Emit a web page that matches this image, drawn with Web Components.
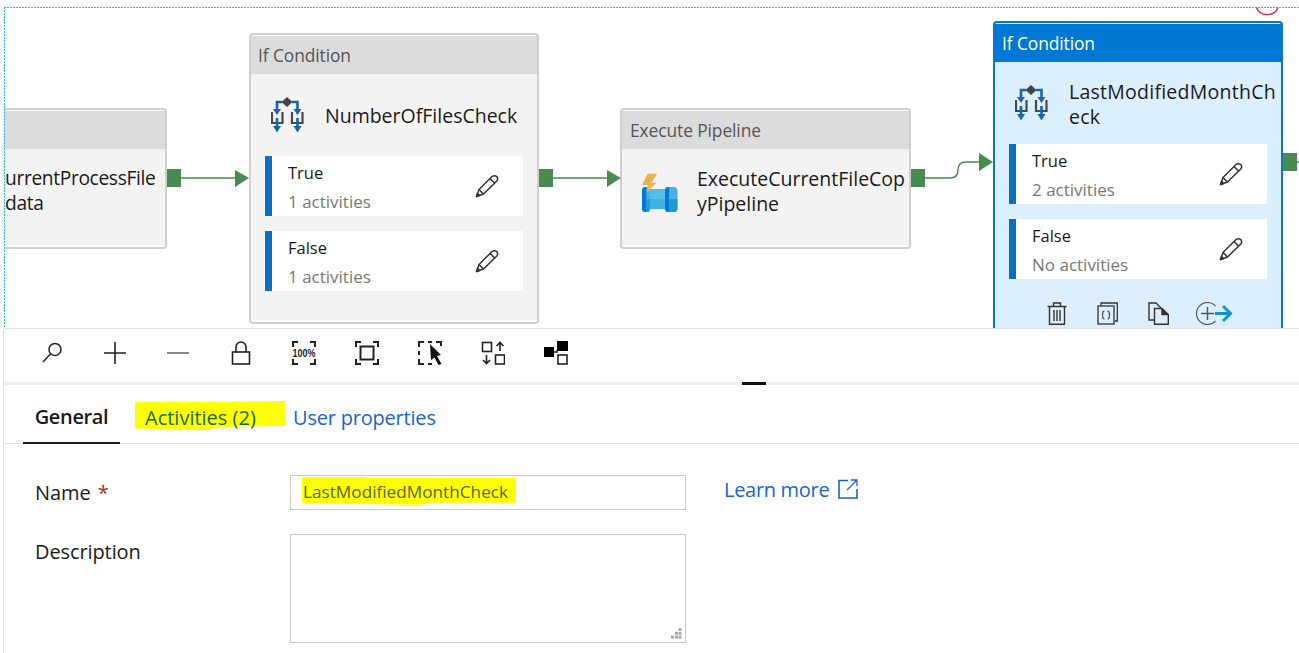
<!DOCTYPE html>
<html>
<head>
<meta charset="utf-8">
<title>Pipeline</title>
<style>
    html, body {
        margin: 0;
        height: 100%;
        overflow: hidden;
        background: #FFF;
        font-family: "Open Sans", "Noto Sans", sans-serif;
    }
</style>
</head>
<body>
<adf-page>
    <pipeline-canvas>
        <pipeline-node style="--x: 4px; --y: 108px; --w: 163px; --row: 86px" clipped header="">
            <span slot="name">urrentProcessFile<br>data</span>
        </pipeline-node>

        <pipeline-node style="--x: 249px; --y: 33px; --w: 290px; --h: 291px; --row: 82px; --nudge: 0px" header="If Condition">
            <if-icon slot="icon"></if-icon>
            <span slot="name">NumberOfFilesCheck</span>
            <branch-row label="True" count="1 activities"></branch-row>
            <branch-row label="False" count="1 activities"></branch-row>
        </pipeline-node>

        <pipeline-node style="--x: 620px; --y: 108px; --w: 291px; --h: 141px; --row: 86px; --pad: 21px; --head-pad: 8px" header="Execute Pipeline">
            <pipe-icon slot="icon"></pipe-icon>
            <span slot="name">ExecuteCurrentFileCop<br>yPipeline</span>
        </pipeline-node>

        <pipeline-node selected style="--x: 993px; --y: 21px; --w: 290px; --h: 330px; --row: 82px; --nudge: 1px; --name-ls: 0.25px" header="If Condition">
            <if-icon slot="icon"></if-icon>
            <span slot="name">LastModifiedMonthCh<br>eck</span>
            <branch-row label="True" count="2 activities"></branch-row>
            <branch-row label="False" count="No activities"></branch-row>
            <node-actions slot="actions"></node-actions>
        </pipeline-node>
    </pipeline-canvas>
    <canvas-toolbar></canvas-toolbar>
    <tab-bar></tab-bar>
    <prop-form></prop-form>
</adf-page>

<script>
const PENCIL = `<svg width="24" height="24" viewBox="0 0 24 24" fill="none" stroke="#333" stroke-width="1.5" stroke-linejoin="round">
    <path d="M1.5 22.5 L4 15.5 L17 2.5 Q19.5 0.8 21.8 2.5 Q23.5 5 21.8 7 L8.5 20 Z"/>
    <path d="M4 15.5 L8.5 20 M15 4.5 L19.8 9.2"/>
    <path d="M1.5 22.5 L2.5 19.5 L4.5 21.5 Z" fill="#333"/>
</svg>`;

class AdfPage extends HTMLElement {
    constructor() {
        super();
        this.shadowDOM = this.attachShadow({ mode: "open" });
    };

    connectedCallback() {
        this.shadowDOM.innerHTML = `
            <style>
                :host {
                    display: flex;
                    flex-direction: column;
                    width: 1299px;
                    height: 653px;
                    overflow: hidden;
                    color: #201f1e;
                }
            </style>
            <slot></slot>
        `;
    };
};

class PipelineCanvas extends HTMLElement {
    constructor() {
        super();
        this.shadowDOM = this.attachShadow({ mode: "open" });
    };

    connectedCallback() {
        this.shadowDOM.innerHTML = `
            <style>
                :host {
                    display: block;
                    position: relative;
                    flex: none;
                    height: 329px;
                    overflow: hidden;
                }
                .guide-top {
                    position: absolute;
                    top: 7px;
                    left: 4px;
                    right: 0;
                    height: 1px;
                    background: repeating-linear-gradient(90deg, #22b8e0 0 2px, transparent 2px 3px);
                }
                .guide-left {
                    position: absolute;
                    top: 7px;
                    bottom: 0;
                    left: 4px;
                    width: 1px;
                    background: repeating-linear-gradient(180deg, #22b8e0 0 2px, transparent 2px 3px);
                    z-index: 2;
                }
                .rule {
                    position: absolute;
                    left: 4px;
                    right: 0;
                    bottom: 0;
                    height: 1px;
                    background: #e1e1e1;
                    z-index: 3;
                }
                svg {
                    position: absolute;
                    left: 0;
                    top: 0;
                }
            </style>
            <div class="guide-top"></div>
            <div class="guide-left"></div>
            <slot></slot>
            <div class="rule"></div>
            <svg width="1299" height="328" viewBox="0 0 1299 328" fill="none">
                <path d="M1256.5 7.5 A11 9 0 0 0 1278 7.5" stroke="#e0282e" stroke-width="1.4"/>
                <g fill="#488a4f">
                    <rect x="167" y="169" width="14" height="18"/>
                    <rect x="539" y="169" width="14" height="18"/>
                    <rect x="911" y="169" width="14" height="18"/>
                    <rect x="1283" y="153" width="14" height="18"/>
                    <path d="M235 170 L249 178 L235 187 Z"/>
                    <path d="M607 170 L621 178 L607 187 Z"/>
                    <path d="M979 153 L993 162 L979 171 Z"/>
                </g>
                <g stroke="#488a4f" stroke-width="1.4">
                    <path d="M181 178 H236"/>
                    <path d="M553 178 H608"/>
                    <path d="M925 178 H950 C956 178 958 175 958 170 C958 165 960 162 966 162 H980"/>
                    <path d="M1297 162 H1299"/>
                </g>
            </svg>
        `;
    };
};

class PipelineNode extends HTMLElement {
    constructor() {
        super();
        this.shadowDOM = this.attachShadow({ mode: "open" });
    };

    connectedCallback() {
        this.shadowDOM.innerHTML = `
            <style>
                :host {
                    position: absolute;
                    left: var(--x);
                    top: var(--y);
                    width: var(--w);
                    height: var(--h, 141px);
                    box-sizing: border-box;
                    display: flex;
                    flex-direction: column;
                    border: 2px solid #cfcfcf;
                    border-radius: 4px;
                    padding: 1px 0 2px;
                    background: #FFF;
                    --fill: #f3f3f3;
                    --head: #dcdcdc;
                    --head-text: #555;
                }
                :host([clipped]) {
                    border-left: 0;
                    border-radius: 0 4px 4px 0;
                }
                :host([selected]) {
                    border: 2px solid #0078d4;
                    --fill: #dcefff;
                    --head: #0078d4;
                    --head-text: #FFF;
                }
                .head {
                    flex: none;
                    height: 38px;
                    box-sizing: border-box;
                    padding-left: var(--head-pad, 7px);
                    background: var(--head);
                    color: var(--head-text);
                    font-size: 17.4px;
                    line-height: 38px;
                    letter-spacing: -0.1px;
                }
                .body {
                    flex: 1;
                    display: flex;
                    flex-direction: column;
                    background: var(--fill);
                }
                .row {
                    flex: none;
                    display: flex;
                    align-items: center;
                    height: var(--row);
                    padding-left: var(--pad, 20px);
                }
                :host([clipped]) .row {
                    padding-left: 1px;
                    align-items: flex-start;
                }
                .icon {
                    flex: none;
                    width: 54px;
                }
                :host([clipped]) .icon {
                    display: none;
                }
                .name {
                    font-size: 19.5px;
                    line-height: 25px;
                    color: #1b1a19;
                    white-space: nowrap;
                    position: relative;
                    top: var(--nudge, -1px);
                    letter-spacing: var(--name-ls, 0);
                }
                :host([clipped]) .name {
                    padding-top: 17px;
                    font-size: 19.2px;
                    letter-spacing: -0.35px;
                }
                .branches {
                    display: flex;
                    flex-direction: column;
                    gap: 15px;
                    padding: 0 14px;
                }
            </style>
            <div class="head">${this.getAttribute("header")}</div>
            <div class="body">
                <div class="row">
                    <div class="icon"><slot name="icon"></slot></div>
                    <div class="name"><slot name="name"></slot></div>
                </div>
                <div class="branches"><slot></slot></div>
                <slot name="actions"></slot>
            </div>
        `;
    };
};

class BranchRow extends HTMLElement {
    constructor() {
        super();
        this.shadowDOM = this.attachShadow({ mode: "open" });
    };

    connectedCallback() {
        this.shadowDOM.innerHTML = `
            <style>
                :host {
                    display: flex;
                    align-items: center;
                    height: 60px;
                    box-sizing: border-box;
                    padding-left: 16px;
                    padding-right: 24px;
                    background: #FFF;
                    border-left: 7px solid #106ebe;
                }
                .text {
                    flex: 1;
                    display: flex;
                    flex-direction: column;
                    gap: 5px;
                    padding-top: 3px;
                }
                .label {
                    font-size: 16.5px;
                    line-height: 24px;
                    color: #1b1a19;
                }
                .count {
                    font-size: 17px;
                    line-height: 24px;
                    color: #777;
                }
                svg {
                    display: block;
                }
            </style>
            <div class="text">
                <div class="label">${this.getAttribute("label")}</div>
                <div class="count">${this.getAttribute("count")}</div>
            </div>
            ${PENCIL}
        `;
    };
};

class IfIcon extends HTMLElement {
    constructor() {
        super();
        this.shadowDOM = this.attachShadow({ mode: "open" });
    };

    connectedCallback() {
        this.shadowDOM.innerHTML = `
            <style>
                :host { display: block; width: 34px; height: 36px; }
            </style>
            <svg width="34" height="36" viewBox="0 0 34 36" fill="none">
                <path d="M1 15 V26 H11.5 V15 M21 15 V26 H31.5 V15" stroke="#4a4a4a" stroke-width="2.2"/>
                <path d="M11 5 H6 V15 M21 5 H26.5 V15 M6 21 V32 M26.5 21 V32" stroke="#1565b0" stroke-width="2.6"/>
                <path d="M2 12 L6 18 L10 12 Z M22.5 12 L26.5 18 L30.5 12 Z M2 29 L6 35.5 L10 29 Z M22.5 29 L26.5 35.5 L30.5 29 Z" fill="#1565b0"/>
                <path d="M16 0 L21.5 5 L16 10 L10.5 5 Z" fill="#444"/>
            </svg>
        `;
    };
};

class PipeIcon extends HTMLElement {
    constructor() {
        super();
        this.shadowDOM = this.attachShadow({ mode: "open" });
    };

    connectedCallback() {
        this.shadowDOM.innerHTML = `
            <style>
                :host { display: block; width: 37px; height: 40px; margin: 1px 0 0 -2px; }
            </style>
            <svg width="37" height="40" viewBox="0 0 37 40">
                <rect x="8" y="16" width="18" height="10" fill="#55bde6"/>
                <rect x="8" y="26" width="18" height="10" fill="#3fb2e2"/>
                <path d="M5 14 Q1 14 1 18 V35 Q1 39 5 39 H7 Q9 39 9 35 V18 Q9 14 7 14 Z" fill="#4fb0e0"/>
                <path d="M4 14 Q1 14 1 18 V35 Q1 39 4 39 H5.5 V14 Z" fill="#0078d4"/>
                <path d="M5.5 26 H9 V35 Q9 39 7 39 H5.5 Z" fill="#1c9bd8"/>
                <path d="M27 14 Q24 14 24 18 V35 Q24 39 27 39 H33 Q36.5 39 36.5 35 V18 Q36.5 14 33 14 Z" fill="#4cb0e0"/>
                <path d="M27 14 Q24 14 24 18 V35 Q24 39 27 39 H28 V14 Z" fill="#0078d4"/>
                <path d="M28 26 H36.5 V35 Q36.5 39 33 39 H28 Z" fill="#1c9bd8"/>
                <path d="M6.3 0.7 H16.3 L10.6 9.7 H15.6 L5.6 19.6 L6.8 12 H1.3 Z" fill="#e8b455"/>
            </svg>
        `;
    };
};

class NodeActions extends HTMLElement {
    constructor() {
        super();
        this.shadowDOM = this.attachShadow({ mode: "open" });
    };

    connectedCallback() {
        this.shadowDOM.innerHTML = `
            <style>
                :host {
                    display: flex;
                    align-items: center;
                    gap: 30px;
                    padding: 23px 0 0 52px;
                }
                svg { display: block; flex: none; }
            </style>
            <svg width="20" height="23" viewBox="0 0 20 23" fill="none" stroke="#333" stroke-width="1.4">
                <path d="M0.5 4.5 H19.5 M6.5 4.5 V1 H13.5 V4.5 M2.5 4.5 V22.3 H17.5 V4.5"/>
                <path d="M7 8 V19 M10 8 V19 M13 8 V19"/>
            </svg>
            <svg width="21" height="23" viewBox="0 0 21 23" fill="none" stroke="#333" stroke-width="1.3">
                <path d="M4 3.5 V1 H20.3 V19 H17.5"/>
                <rect x="1" y="4" width="16" height="18"/>
                <path d="M7.5 9 Q5.8 9 5.8 10.5 V11.8 Q5.8 13 4.8 13 Q5.8 13 5.8 14.2 V15.5 Q5.8 17 7.5 17 M10.5 9 Q12.2 9 12.2 10.5 V11.8 Q12.2 13 13.2 13 Q12.2 13 12.2 14.2 V15.5 Q12.2 17 10.5 17" stroke-width="1.1"/>
            </svg>
            <svg width="21" height="23" viewBox="0 0 21 23" fill="none" stroke="#333" stroke-width="1.4">
                <path d="M6 18 H1 V1 H8 L12.5 5.5 V6.5"/>
                <path d="M6.5 6.5 H14 L20.3 12.5 V22.3 H6.5 Z"/>
                <path d="M14 6.5 V12.5 H20.3" fill="#333"/>
            </svg>
            <svg width="37" height="23" viewBox="0 0 37 23" fill="none" style="margin-left: -3px">
                <path d="M19.5 19 A11 11 0 1 1 19.5 4" stroke="#555" stroke-width="1.2"/>
                <path d="M5 11.5 H18 M11.5 5 V18" stroke="#555" stroke-width="1.4"/>
                <path d="M19 11.5 H34 M27 4 L34.5 11.5 L27 19" stroke="#1295c9" stroke-width="3"/>
            </svg>
        `;
    };
};

class CanvasToolbar extends HTMLElement {
    constructor() {
        super();
        this.shadowDOM = this.attachShadow({ mode: "open" });
    };

    connectedCallback() {
        this.shadowDOM.innerHTML = `
            <style>
                :host {
                    display: flex;
                    align-items: center;
                    flex: none;
                    height: 53px;
                    box-sizing: border-box;
                    gap: 39px;
                    padding: 0 0 5px 36px;
                    margin-left: 3px;
                    border-left: 1px solid #e1e1e1;
                }
                svg { display: block; flex: none; }
                text { font: bold 9px "Liberation Sans", sans-serif; fill: #222; }
            </style>
            <svg width="24" height="24" viewBox="0 0 24 24" fill="none" stroke="#222" stroke-width="1.5">
                <circle cx="15" cy="8.5" r="6"/>
                <path d="M10.5 13 L3 21"/>
            </svg>
            <svg width="24" height="24" viewBox="0 0 24 24" fill="none" stroke="#222" stroke-width="1.6">
                <path d="M12 1 V23 M1 12 H23"/>
            </svg>
            <svg width="24" height="24" viewBox="0 0 24 24" fill="none" stroke="#555" stroke-width="1.4">
                <path d="M1 12 H23"/>
            </svg>
            <svg width="24" height="24" viewBox="0 0 24 24" fill="none" stroke="#222" stroke-width="1.6">
                <rect x="3.5" y="11" width="17" height="12"/>
                <path d="M7 11 V6 A5 5 0 0 1 17 6 V11"/>
            </svg>
            <svg width="24" height="24" viewBox="0 0 24 24" fill="none" stroke="#222" stroke-width="2">
                <path d="M1 6 V1 H6 M18 1 H23 V6 M23 18 V23 H18 M6 23 H1 V18"/>
                <text x="0.5" y="12.7" stroke="none" transform="scale(1 1.25)">100%</text>
            </svg>
            <svg width="24" height="24" viewBox="0 0 24 24" fill="none" stroke="#222" stroke-width="2">
                <path d="M1 6 V1 H6 M18 1 H23 V6 M23 18 V23 H18 M6 23 H1 V18"/>
                <rect x="5.5" y="5.5" width="13" height="13"/>
            </svg>
            <svg width="24" height="24" viewBox="0 0 24 24" fill="none" stroke="#222" stroke-width="2">
                <path d="M1 6 V1 H6 M10 1 H14 M18 1 H23 V5 M1 10 V14 M1 18 V23 H6 M10 23 H14"/>
                <path d="M12 3 L23 14 L19 15 L23.5 23 L20.5 24 L16.5 16.5 L13 19 Z" fill="#111" stroke="none"/>
            </svg>
            <svg width="24" height="24" viewBox="0 0 24 24" fill="none" stroke="#222" stroke-width="1.6">
                <rect x="1.5" y="1.5" width="9" height="9"/>
                <rect x="14.5" y="14" width="9" height="9"/>
                <path d="M19 10 V1.5 M15.5 5 L19 1.5 L22.5 5 M5.5 14 V22.5 M2 19 L5.5 22.5 L9 19"/>
            </svg>
            <svg width="24" height="24" viewBox="0 0 24 24" fill="none" stroke="#222" stroke-width="1.6">
                <rect x="0" y="6" width="10" height="10" fill="#000" stroke="none"/>
                <rect x="13" y="0" width="11" height="10" fill="#000" stroke="none"/>
                <path d="M10 11 H13 V9"/>
                <rect x="14" y="14" width="9" height="9"/>
            </svg>
        `;
    };
};

class TabBar extends HTMLElement {
    constructor() {
        super();
        this.shadowDOM = this.attachShadow({ mode: "open" });
    };

    connectedCallback() {
        this.shadowDOM.innerHTML = `
            <style>
                :host {
                    display: flex;
                    flex: none;
                    position: relative;
                    height: 62px;
                    box-sizing: border-box;
                    padding: 3px 0 0 19px;
                    margin-left: 3px;
                    border-left: 1px solid #e1e1e1;
                    border-top: 3px solid #eee;
                    border-bottom: 1px solid #e1e1e1;
                    font-size: 20px;
                }
                .grip {
                    position: absolute;
                    left: 738px;
                    top: -3px;
                    width: 24px;
                    height: 3px;
                    background: #111;
                }
                .tab {
                    display: flex;
                    align-items: center;
                    justify-content: center;
                    box-sizing: border-box;
                    height: 56px;
                    padding-top: 3px;
                }
                .general {
                    width: 97px;
                    font-weight: 600;
                    color: #1b1a19;
                    border-bottom: 2px solid #1b1a19;
                    letter-spacing: -0.35px;
                }
                .activities {
                    position: relative;
                    margin-left: 15px;
                    width: 150px;
                    justify-content: flex-start;
                    padding-left: 10px;
                    color: #1c6a10;
                }
                .activities::before {
                    content: "";
                    position: absolute;
                    left: 0;
                    top: 13px;
                    width: 150px;
                    height: 29px;
                    background: #ffff0a;
                    clip-path: polygon(0 3%, 60% 3%, 100% 0, 100% 85%, 60% 90%, 45% 100%, 0 95%);
                }
                .activities span {
                    position: relative;
                }
                .user {
                    margin-left: 8px;
                    color: #1a62d8;
                    letter-spacing: -0.2px;
                }
            </style>
            <div class="grip"></div>
            <div class="tab general">General</div>
            <div class="tab activities"><span>Activities (2)</span></div>
            <div class="tab user">User properties</div>
        `;
    };
};

class PropForm extends HTMLElement {
    constructor() {
        super();
        this.shadowDOM = this.attachShadow({ mode: "open" });
    };

    connectedCallback() {
        this.shadowDOM.innerHTML = `
            <style>
                :host {
                    display: grid;
                    grid-template-columns: 255px 396px max-content;
                    grid-template-rows: 35px 109px;
                    row-gap: 24px;
                    align-items: start;
                    padding: 31px 0 0 31px;
                    flex: 1;
                    border-left: 1px solid #e1e1e1;
                    margin-left: 3px;
                    font-size: 20px;
                    letter-spacing: -0.1px;
                    color: #1b1a19;
                }
                .label {
                    line-height: 26px;
                    padding-top: 5px;
                }
                .req {
                    color: #a4262c;
                    margin-left: 2px;
                }
                .field {
                    box-sizing: border-box;
                    border: 1px solid #c8c8c8;
                    background: #FFF;
                }
                .input {
                    height: 35px;
                    padding: 1px 0 0 11px;
                }
                .mark {
                    display: inline-block;
                    height: 28px;
                    line-height: 30px;
                    padding: 0 8px 0 1px;
                    font-size: 17.2px;
                    letter-spacing: 0;
                    color: #5c6600;
                    background: #ffff0a;
                    clip-path: polygon(0 0, 30% 0, 30% 3%, 100% 3%, 100% 92%, 60% 92%, 55% 100%, 30% 96%, 0 92%);
                }
                .area {
                    position: relative;
                    height: 109px;
                }
                .area svg {
                    position: absolute;
                    right: 3px;
                    bottom: 3px;
                }
                .learn {
                    display: flex;
                    align-items: center;
                    gap: 9px;
                    margin-left: 38px;
                    margin-top: 1px;
                    height: 26px;
                    color: #1a62d8;
                    letter-spacing: -0.3px;
                }
            </style>
            <div class="label">Name <span class="req">*</span></div>
            <div class="field input"><span class="mark">LastModifiedMonthCheck</span></div>
            <div class="learn">Learn more
                <svg width="20" height="20" viewBox="0 0 20 20" fill="none" stroke="#1a62d8" stroke-width="1.6">
                    <path d="M10 1.5 H1 V19 H19 V10"/>
                    <path d="M9 11 L18.5 1.5 M13 1 H19 V7" stroke-width="1.3"/>
                </svg>
            </div>
            <div class="label">Description</div>
            <div class="field area">
                <svg width="11" height="11" viewBox="0 0 11 11" fill="#aaa">
                    <rect x="7.5" y="0" width="3" height="3"/>
                    <rect x="4" y="3.8" width="3" height="3"/>
                    <rect x="7.5" y="3.8" width="3" height="3"/>
                    <rect x="0" y="7.6" width="3" height="3"/>
                    <rect x="4" y="7.6" width="3" height="3"/>
                    <rect x="7.5" y="7.6" width="3" height="3"/>
                </svg>
            </div>
        `;
    };
};

customElements.define("adf-page", AdfPage);
customElements.define("pipeline-canvas", PipelineCanvas);
customElements.define("pipeline-node", PipelineNode);
customElements.define("branch-row", BranchRow);
customElements.define("if-icon", IfIcon);
customElements.define("pipe-icon", PipeIcon);
customElements.define("node-actions", NodeActions);
customElements.define("canvas-toolbar", CanvasToolbar);
customElements.define("tab-bar", TabBar);
customElements.define("prop-form", PropForm);
</script>
</body>
</html>
